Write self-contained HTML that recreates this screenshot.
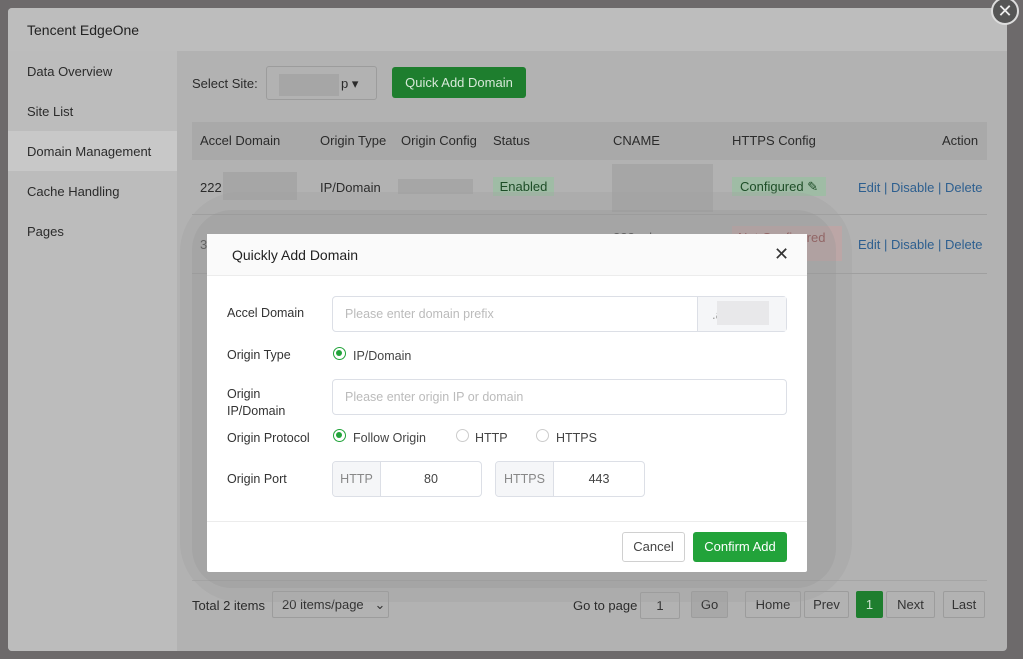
<!DOCTYPE html>
<html><head><meta charset="utf-8"><style>
*{box-sizing:border-box;margin:0;padding:0}
body{width:1023px;height:659px;overflow:hidden;background:#6d6a6b;font-family:"Liberation Sans",sans-serif;font-size:13px;color:#2b2b2b;position:relative}
.a{position:absolute}
.panel{left:8px;top:8px;width:999px;height:643px;background:#b2b2b2;border-radius:4px;overflow:hidden}
.hdr{left:0;top:0;width:999px;height:43px;background:#bdbdbd}
.side{left:0;top:43px;width:169px;height:600px;background:#bcbcbc}
.nav{left:19px;font-size:13px}
.th{top:114px;left:184px;width:795px;height:38px;background:#a9a9a9}
.lnk{color:#2d5f8f}
.blur{background:#a6a6a6}
.pg{height:27px;border:1px solid #9c9c9c;background:#b2b2b2;text-align:center;line-height:25px;color:#333;border-radius:2px}
.modal{left:207px;top:234px;width:600px;height:338px;background:#fff;border-radius:2px}
.lbl{left:20px;color:#333;font-size:12.5px}
.inp{border:1px solid #dcdfe6;border-radius:4px;background:#fff;color:#bbb;font-size:12.5px}
.rad{width:13px;height:13px;border-radius:50%;border:1px solid #ccc;background:#fff}
.rad.on{border:1.5px solid #22a33a}
.rad.on::after{content:"";position:absolute;left:2px;top:2px;width:6px;height:6px;border-radius:50%;background:#22a33a}
</style></head><body>
<div class="a panel">
 <div class="a hdr"></div>
 <div class="a" style="left:19px;top:14px;font-size:14px;color:#222">Tencent EdgeOne</div>
 <div class="a side"></div>
 <div class="a" style="left:0;top:123px;width:169px;height:40px;background:#c8c8c8"></div>
 <div class="a nav" style="top:56px">Data Overview</div>
 <div class="a nav" style="top:96px">Site List</div>
 <div class="a nav" style="top:136px">Domain Management</div>
 <div class="a nav" style="top:176px">Cache Handling</div>
 <div class="a nav" style="top:216px">Pages</div>

 <div class="a" style="left:184px;top:68px">Select Site:</div>
 <div class="a" style="left:258px;top:58px;width:111px;height:34px;border:1px solid #9c9c9c;border-radius:3px"></div>
 <div class="a blur" style="left:271px;top:66px;width:60px;height:22px"></div>
 <div class="a" style="left:333px;top:68px">p ▾</div>
 <div class="a" style="left:384px;top:59px;width:134px;height:31px;background:#1e7e2e;border-radius:3px;color:#d7e9d9;text-align:center;line-height:31px">Quick Add Domain</div>

 <div class="a th"></div>
 <div class="a" style="top:125px;left:192px">Accel Domain</div>
 <div class="a" style="top:125px;left:312px">Origin Type</div>
 <div class="a" style="top:125px;left:393px">Origin Config</div>
 <div class="a" style="top:125px;left:485px">Status</div>
 <div class="a" style="top:125px;left:605px">CNAME</div>
 <div class="a" style="top:125px;left:724px">HTTPS Config</div>
 <div class="a" style="top:125px;left:934px">Action</div>

 <div class="a" style="top:172px;left:192px">222</div>
 <div class="a blur" style="top:164px;left:215px;width:74px;height:28px"></div>
 <div class="a" style="top:172px;left:312px">IP/Domain</div>
 <div class="a blur" style="top:171px;left:390px;width:75px;height:15px"></div>
 <div class="a" style="top:169px;left:485px;width:61px;height:19px;background:#9fbca5;text-align:center;line-height:19px;color:#1d4d27">Enabled</div>
 <div class="a blur" style="top:156px;left:604px;width:101px;height:48px"></div>
 <div class="a" style="top:169px;left:724px;width:94px;height:19px;background:#9fbca5;line-height:19px;padding-left:8px;color:#1d4d27">Configured ✎</div>
 <div class="a lnk" style="top:172px;left:850px">Edit | Disable | Delete</div>
 <div class="a" style="top:206px;left:184px;width:795px;height:1px;background:#9f9f9f"></div>
 <div class="a" style="top:218px;left:724px;width:110px;height:35px;background:#c9a9a9"></div>
 <div class="a" style="top:222px;left:730px;color:#8a3030">Not Configured</div>
 <div class="a" style="top:222px;left:605px">222.a.b.c</div>
 <div class="a" style="top:229px;left:192px">3</div>
 <div class="a lnk" style="top:229px;left:850px">Edit | Disable | Delete</div>
 <div class="a" style="top:265px;left:184px;width:795px;height:1px;background:#9f9f9f"></div>
 <div class="a" style="top:572px;left:184px;width:795px;height:1px;background:#a5a5a5"></div>

 <div class="a" style="top:590px;left:184px">Total 2 items</div>
 <div class="a pg" style="top:583px;left:264px;width:117px;text-align:left;padding-left:9px">20 items/page &nbsp;&nbsp;⌄</div>
 <div class="a" style="top:590px;left:565px">Go to page</div>
 <div class="a pg" style="top:584px;left:632px;width:40px">1</div>
 <div class="a pg" style="top:583px;left:683px;width:37px;background:#a8a8a8">Go</div>
 <div class="a pg" style="top:583px;left:737px;width:56px">Home</div>
 <div class="a pg" style="top:583px;left:796px;width:45px">Prev</div>
 <div class="a pg" style="top:583px;left:848px;width:27px;background:#1e7e2e;color:#cfe3d2;border-color:#1e7e2e">1</div>
 <div class="a pg" style="top:583px;left:878px;width:49px">Next</div>
 <div class="a pg" style="top:583px;left:935px;width:42px">Last</div>
</div>
<div class="a" style="left:991px;top:-3px;width:28px;height:28px;border-radius:50%;background:#555;border:2px solid #ddd;color:#eee;text-align:center;line-height:24px;font-size:18px">✕</div>

<div class="a" style="left:180px;top:192px;width:672px;height:410px;background:rgba(160,160,160,.3);border-radius:60px"></div>
<div class="a" style="left:192px;top:210px;width:644px;height:378px;background:rgba(150,150,150,.3);border-radius:40px"></div>

<div class="a modal">
 <div class="a" style="left:0;top:0;width:600px;height:42px;background:#fafafa;border-bottom:1px solid #ececec"></div>
 <div class="a" style="left:25px;top:13px;font-size:14px;color:#222">Quickly Add Domain</div>
 <div class="a" style="left:567px;top:10px;font-size:18px;color:#333">✕</div>

 <div class="a lbl" style="top:72px">Accel Domain</div>
 <div class="a inp" style="left:125px;top:62px;width:455px;height:36px;padding:10px 12px">Please enter domain prefix</div>
 <div class="a" style="left:490px;top:63px;width:89px;height:34px;background:#f5f6f8;border-left:1px solid #dcdfe6;color:#999;padding:10px 14px">.a</div>
 <div class="a" style="left:510px;top:67px;width:52px;height:24px;background:#e8e8ea"></div>

 <div class="a lbl" style="top:114px">Origin Type</div>
 <div class="a rad on" style="left:126px;top:113px"></div>
 <div class="a" style="left:146px;top:115px;font-size:12.5px;color:#444">IP/Domain</div>

 <div class="a lbl" style="top:152px;line-height:17px">Origin<br>IP/Domain</div>
 <div class="a inp" style="left:125px;top:145px;width:455px;height:36px;padding:10px 12px">Please enter origin IP or domain</div>

 <div class="a lbl" style="top:197px">Origin Protocol</div>
 <div class="a rad on" style="left:126px;top:195px"></div>
 <div class="a" style="left:146px;top:197px;font-size:12.5px;color:#444">Follow Origin</div>
 <div class="a rad" style="left:249px;top:195px"></div>
 <div class="a" style="left:268px;top:197px;font-size:12.5px;color:#444">HTTP</div>
 <div class="a rad" style="left:329px;top:195px"></div>
 <div class="a" style="left:349px;top:197px;font-size:12.5px;color:#444">HTTPS</div>

 <div class="a lbl" style="top:238px">Origin Port</div>
 <div class="a inp" style="left:125px;top:227px;width:150px;height:36px;overflow:hidden;color:#444">
  <div class="a" style="left:0;top:0;width:48px;height:34px;background:#f5f6f8;border-right:1px solid #dcdfe6;color:#888;line-height:34px;text-align:center">HTTP</div>
  <div class="a" style="left:48px;top:0;width:100px;line-height:34px;text-align:center">80</div>
 </div>
 <div class="a inp" style="left:288px;top:227px;width:150px;height:36px;overflow:hidden;color:#444">
  <div class="a" style="left:0;top:0;width:58px;height:34px;background:#f5f6f8;border-right:1px solid #dcdfe6;color:#888;line-height:34px;text-align:center">HTTPS</div>
  <div class="a" style="left:58px;top:0;width:90px;line-height:34px;text-align:center">443</div>
 </div>

 <div class="a" style="left:0;top:287px;width:600px;height:1px;background:#ececec"></div>
 <div class="a" style="left:415px;top:298px;width:63px;height:30px;border:1px solid #d0d0d0;border-radius:3px;text-align:center;line-height:28px;color:#444">Cancel</div>
 <div class="a" style="left:486px;top:298px;width:94px;height:30px;background:#22a33a;border-radius:3px;text-align:center;line-height:30px;color:#fff">Confirm Add</div>
</div>
</body></html>
